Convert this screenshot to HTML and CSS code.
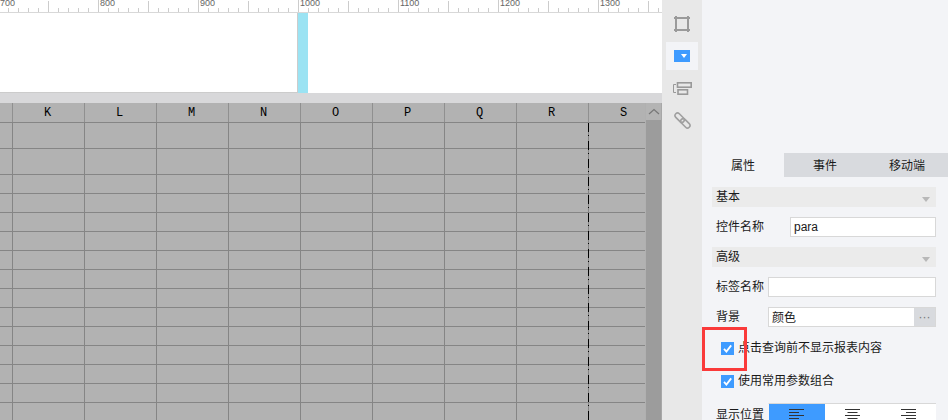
FILE: index.html
```html
<!DOCTYPE html>
<html lang="zh-CN">
<head>
  <meta charset="UTF-8" />
  <title>参数面板</title>
  <link rel="stylesheet" href="styles.css">
</head>
<body>
  <div class="app">
    <div class="canvas">
      <div class="ruler">
        <div class="ruler-seg">700</div>
        <div class="ruler-seg">800</div>
        <div class="ruler-seg">900</div>
        <div class="ruler-seg">1000</div>
        <div class="ruler-seg">1100</div>
        <div class="ruler-seg">1200</div>
        <div class="ruler-seg">1300</div>
      </div>

      <div class="page-area">
        <div class="page-left"></div>
        <div class="page-mark"></div>
        <div class="page-right"></div>
      </div>

      <div class="sheet">
        <div class="sheet-main">
          <div class="sheet-head">
            <div class="head-cell head-first"></div>
            <div class="head-cell">K</div>
            <div class="head-cell">L</div>
            <div class="head-cell">M</div>
            <div class="head-cell">N</div>
            <div class="head-cell">O</div>
            <div class="head-cell">P</div>
            <div class="head-cell">Q</div>
            <div class="head-cell">R</div>
            <div class="head-cell">S</div>
          </div>
          <div class="sheet-body">
            <div class="row row-tall"></div>
            <div class="row row-tall"></div>
            <div class="row"></div>
            <div class="row"></div>
            <div class="row"></div>
            <div class="row"></div>
            <div class="row"></div>
            <div class="row"></div>
            <div class="row"></div>
            <div class="row"></div>
            <div class="row"></div>
            <div class="row"></div>
            <div class="row"></div>
            <div class="row"></div>
            <div class="row"></div>
            <div class="page-break"></div>
          </div>
        </div>
        <div class="scrollbar">
          <div class="scroll-up">
            <svg width="12" height="7" viewBox="0 0 12 7"><path d="M1 6 L6 1.5 L11 6" fill="none" stroke="#777" stroke-width="1.2"/></svg>
          </div>
        </div>
      </div>
    </div>

    <div class="toolbar">
      <div class="tool">
        <svg width="16" height="16" viewBox="0 0 16 16" fill="none" stroke="#9a9a9a" stroke-width="2">
          <path d="M0 2 H16 M0 14 H16 M2 0 V16 M14 0 V16"/>
        </svg>
      </div>
      <div class="tool tool-active">
        <div class="combo-icon"><span class="combo-arrow"></span></div>
      </div>
      <div class="tool">
        <svg width="19" height="13" viewBox="0 0 19 13" fill="none" stroke="#999">
          <path d="M3 2.5 H0.5 V10.5 H3" stroke-width="1"/>
          <rect x="4.5" y="0.8" width="13.7" height="4.4" stroke-width="1.6"/>
          <rect x="5" y="7.8" width="9.5" height="4.4" stroke-width="1.6"/>
        </svg>
      </div>
      <div class="tool">
        <svg width="17" height="17" viewBox="0 0 17 17" fill="none" stroke="#a0a0a0" stroke-width="1.6">
          <g transform="rotate(45 8.5 8.5)">
            <rect x="-1" y="6" width="11" height="5" rx="2.5"/>
            <rect x="7" y="6" width="11" height="5" rx="2.5"/>
          </g>
        </svg>
      </div>
    </div>

    <div class="panel">
      <div class="tabs">
        <div class="tab tab-active">属性</div>
        <div class="tab">事件</div>
        <div class="tab">移动端</div>
      </div>

      <div class="panel-body">
        <div class="section-bar">基本<span class="section-arrow"></span></div>
        <div class="field">
          <label class="field-label field-label-wide">控件名称</label>
          <div class="text-box">para</div>
        </div>

        <div class="section-bar">高级<span class="section-arrow"></span></div>
        <div class="field">
          <label class="field-label">标签名称</label>
          <div class="text-box"></div>
        </div>
        <div class="field">
          <label class="field-label">背景</label>
          <div class="text-box text-box-more">
            <span class="text-box-value">颜色</span>
            <span class="more-btn">···</span>
          </div>
        </div>

        <div class="checks">
          <div class="check-row">
            <span class="checkbox">
              <svg width="13" height="13" viewBox="0 0 13 13"><path d="M3 6.8 L5.4 9.5 L10.2 3.4" fill="none" stroke="#fff" stroke-width="1.8"/></svg>
            </span>
            点击查询前不显示报表内容
          </div>
          <div class="check-row">
            <span class="checkbox">
              <svg width="13" height="13" viewBox="0 0 13 13"><path d="M3 6.8 L5.4 9.5 L10.2 3.4" fill="none" stroke="#fff" stroke-width="1.8"/></svg>
            </span>
            使用常用参数组合
          </div>
        </div>

        <div class="field field-align">
          <label class="field-label">显示位置</label>
          <div class="segments">
            <div class="segment segment-active">
              <svg width="15" height="12" viewBox="0 0 15 12" stroke="#333"><path d="M0 0.5 H15 M0 3.5 H10 M0 6.5 H15 M0 9.5 H10"/></svg>
            </div>
            <div class="segment">
              <svg width="15" height="12" viewBox="0 0 15 12" stroke="#333"><path d="M0 0.5 H15 M2.5 3.5 H12.5 M0 6.5 H15 M2.5 9.5 H12.5"/></svg>
            </div>
            <div class="segment">
              <svg width="15" height="12" viewBox="0 0 15 12" stroke="#333"><path d="M0 0.5 H15 M5 3.5 H15 M0 6.5 H15 M5 9.5 H15"/></svg>
            </div>
          </div>
        </div>
      </div>

      <div class="highlight"></div>
    </div>
  </div>
</body>
</html>
```

FILE: styles.css
```css
* {
  box-sizing: border-box;
}

body {
  margin: 0;
  overflow: hidden;
  font-family: "Liberation Sans", "Noto Sans CJK SC", sans-serif;
  font-size: 12px;
  color: #1a1a1a;
}

.app {
  display: flex;
  height: 420px;
  overflow: hidden;
}

/* left side: ruler, page, sheet */
.canvas {
  width: 662px;
  display: flex;
  flex-direction: column;
  overflow: hidden;
  background: #d8d8da;
}

.ruler {
  display: flex;
  height: 13px;
  flex: none;
  margin-left: -2px;
  background: #fff;
  border-bottom: 1px solid #d8d8d8;
  overflow: hidden;
}

.ruler-seg {
  width: 100px;
  flex: none;
  padding-left: 1px;
  border-left: 1px solid #ccc;
  font-size: 9px;
  line-height: 6px;
  color: #666;
  background-image:
    linear-gradient(#ccc, #ccc),
    linear-gradient(to right, #ccc 1px, transparent 1px);
  background-repeat: no-repeat, repeat-x;
  background-size: 1px 11px, 10px 4px;
  background-position: 49px 1px, 9px 8px;
}

.page-area {
  display: flex;
  height: 80px;
  flex: none;
  background: #fff;
}

.page-left {
  width: 298px;
  border-right: 1px solid #ccc;
  border-bottom: 1px solid #ccc;
}

.page-mark {
  width: 10px;
  background: #9be3f3;
}

.page-right {
  flex: 1;
}

.sheet {
  display: flex;
  margin-top: 10px;
  flex: 1;
  min-height: 0;
  background: #b2b2b2;
}

.sheet-main {
  width: 645px;
  overflow: hidden;
}

.sheet-head {
  display: flex;
  height: 20px;
  border-bottom: 1px solid #858585;
}

.head-cell {
  width: 72px;
  flex: none;
  padding-right: 2px;
  border-right: 1px solid #909090;
  font-family: "Liberation Mono", monospace;
  font-size: 12px;
  line-height: 21px;
  text-align: center;
  color: #000;
}

.head-first {
  width: 13px;
}

.sheet-body {
  position: relative;
  height: 298px;
  background-image: linear-gradient(to right, #858585 1px, transparent 1px);
  background-size: 72px 100%;
  background-position: 12px 0;
}

.row {
  height: 19px;
  border-bottom: 1px solid #858585;
}

.row-tall {
  height: 26px;
}

.page-break {
  position: absolute;
  left: 588px;
  top: 0;
  bottom: 0;
  width: 1px;
  background-image: linear-gradient(to bottom, #000 0, #000 9px, transparent 9px, transparent 12px, #000 12px, #000 13px, transparent 13px);
  background-size: 1px 18px;
}

.scrollbar {
  width: 17px;
  flex: none;
  background: #9c9c9c;
  border-left: 1px solid #b0b0b0;
  border-right: 1px solid #a8a8a8;
}

.scroll-up {
  display: flex;
  align-items: center;
  justify-content: center;
  height: 17px;
  background: #b4b4b4;
}

/* middle icon strip */
.toolbar {
  width: 40px;
  flex: none;
  display: flex;
  flex-direction: column;
  align-items: center;
  gap: 4px;
  padding-top: 10px;
  background: #e8e8e8;
}

.tool {
  width: 32px;
  height: 28px;
  display: flex;
  align-items: center;
  justify-content: center;
}

.tool-active {
  background: #f3f4f7;
}

.combo-icon {
  width: 16px;
  height: 12px;
  display: flex;
  align-items: center;
  justify-content: center;
  padding-left: 4px;
  background: #3e9bff;
}

.combo-arrow {
  width: 0;
  height: 0;
  border-left: 3px solid transparent;
  border-right: 3px solid transparent;
  border-top: 4px solid #fff;
}

/* right panel */
.panel {
  position: relative;
  flex: 1;
  padding-top: 153px;
  background: #f3f4f7;
}

.tabs {
  display: flex;
  height: 24px;
}

.tab {
  flex: 1;
  line-height: 26px;
  text-align: center;
  background: #d8dade;
}

.tab-active {
  background: #f3f4f7;
}

.panel-body {
  display: flex;
  flex-direction: column;
  gap: 10px;
  padding: 10px 12px 0 10px;
}

.section-bar {
  position: relative;
  height: 20px;
  padding-left: 4px;
  line-height: 20px;
  background: #ebebeb;
}

.section-arrow {
  position: absolute;
  right: 6px;
  top: 10px;
  width: 0;
  height: 0;
  border-left: 4px solid transparent;
  border-right: 4px solid transparent;
  border-top: 5px solid #b8b8b8;
}

.field {
  display: flex;
  align-items: flex-start;
  height: 20px;
}

.field-label {
  width: 56px;
  flex: none;
  padding-left: 4px;
  line-height: 21px;
}

.field-label-wide {
  width: 78px;
}

.text-box {
  flex: 1;
  height: 20px;
  padding-left: 3px;
  line-height: 18px;
  background: #fff;
  border: 1px solid #d8d8d8;
}

.text-box-more {
  display: flex;
  padding-right: 0;
}

.text-box-value {
  flex: 1;
  line-height: 20px;
}

.more-btn {
  width: 21px;
  text-align: center;
  color: #777;
  background: #d8dade;
}

.checks {
  display: flex;
  flex-direction: column;
  gap: 13px;
  margin-top: 1px;
  padding-left: 9px;
}

.check-row {
  display: flex;
  align-items: flex-start;
  gap: 4px;
  height: 20px;
  line-height: 20px;
}

.checkbox {
  width: 13px;
  height: 13px;
  flex: none;
  display: flex;
  margin-top: 4px;
  background: #3e9bff;
}

.field-align {
  margin-top: 2px;
}

.field-align .field-label {
  line-height: 24px;
}

.segments {
  flex: 1;
  display: flex;
  height: 30px;
  background: #fff;
  border-top: 1px solid #d8d8d8;
  border-left: 1px solid #f3f4f7;
}

.segment {
  flex: 1;
  display: flex;
  justify-content: center;
  padding-top: 5px;
}

.segment-active {
  background: #3e9bff;
}

/* red annotation drawn over the checkbox */
.highlight {
  position: absolute;
  left: 0;
  top: 327px;
  width: 45px;
  height: 44px;
  border: 3px solid #fa3a3a;
}
```
